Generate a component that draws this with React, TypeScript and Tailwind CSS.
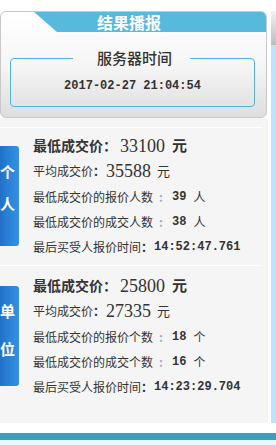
import React from 'react';

const cjk = "font-['Noto_Sans_CJK_SC','Noto_Sans',sans-serif]";
const mono = "font-['Liberation_Mono','Noto_Sans_CJK_SC',monospace]";
const serif = "font-['Liberation_Serif','Noto_Sans_CJK_SC',serif]";

interface Result {
  tab: [string, string];
  tabPad: string;
  tabGap: string;
  sectionPad: string;
  lowest: string;
  average: string;
  unit: string;
  bidCount: string;
  dealCount: string;
  lastTime: string;
}

const results: Result[] = [
  {
    tab: ['个', '人'],
    tabPad: 'pt-[18px]',
    tabGap: 'gap-[17px]',
    sectionPad: 'pt-[5px] pb-[6px]',
    lowest: '33100',
    average: '35588',
    unit: '人',
    bidCount: '39',
    dealCount: '38',
    lastTime: '14:52:47.761',
  },
  {
    tab: ['单', '位'],
    tabPad: 'pt-[17px]',
    tabGap: 'gap-[23px]',
    sectionPad: 'pt-[7px]',
    lowest: '25800',
    average: '27335',
    unit: '个',
    bidCount: '18',
    dealCount: '16',
    lastTime: '14:23:29.704',
  },
];

function CountRow({ label, value, unit, extra }: { label: string; value: string; unit: string; extra?: string }) {
  return (
    <div className={`flex h-[25px] items-center text-[12px] text-[#333] ${extra ?? ''}`}>
      <span>{label}</span>
      <span className="ml-[3px] w-[10px] text-center font-bold text-[#9db0c2]">:</span>
      <span className={`${mono} ml-[6px] text-[12px] font-bold`}>{value}</span>
      <span className="ml-[7px]">{unit}</span>
    </div>
  );
}

function ResultSection({ r }: { r: Result }) {
  return (
    <div className={r.sectionPad}>
      <div className="flex items-start">
        {/* Side tab */}
        <div
          className={`mt-[13px] flex h-[100px] w-[19px] flex-col rounded-r-[3px] bg-gradient-to-r from-[#2070c6] via-[#2b84d7] to-[#3490e2] ${r.tabPad} ${r.tabGap}`}
        >
          {r.tab.map((c) => (
            <span key={c} className="block w-[15px] text-center text-[15px] font-bold leading-[15px] text-white">
              {c}
            </span>
          ))}
        </div>

        {/* Figures */}
        <div className="ml-[14px] flex flex-col">
          <div className="flex h-[25px] items-center text-[#333]">
            <span className="text-[14px] font-bold">最低成交价</span>
            <span className="w-[14px] text-[14px] font-bold">：</span>
            <span className={`${serif} ml-[3px] text-[18px] leading-none`}>{r.lowest}</span>
            <span className="ml-[7px] text-[15px] font-bold">元</span>
          </div>
          <div className="flex h-[25px] items-center text-[#333]">
            <span className="text-[12px]">平均成交价</span>
            <span className="w-[12px] text-[12px] font-bold">：</span>
            <span className={`${serif} ml-[1px] text-[18px] leading-none`}>{r.average}</span>
            <span className="ml-[6px] text-[13px]">元</span>
          </div>
          <CountRow label={`最低成交价的报价${r.unit}数`} value={r.bidCount} unit={r.unit} extra="mt-[1px]" />
          <CountRow label={`最低成交价的成交${r.unit}数`} value={r.dealCount} unit={r.unit} />
          <div className="flex h-[25px] items-center text-[12px] text-[#333]">
            <span>最后买受人报价时间</span>
            <span className="w-[12px] font-bold">：</span>
            <span className={`${mono} ml-[1px] font-bold`}>{r.lastTime}</span>
          </div>
        </div>
      </div>
    </div>
  );
}

export default function App() {
  return (
    <div className={`h-[445px] w-[276px] overflow-hidden bg-white ${cjk}`}>
      <div className="flex pt-[11px]">
        <div className="w-[268px]">
          {/* Header panel */}
          <div className="h-[107px] w-[267px] overflow-hidden rounded-[6px] border border-[#c9c9c9] bg-gradient-to-b from-white via-[#f6f6f6] to-[#dedede]">
            <div className="ml-[33px] flex h-[20px] items-center justify-center bg-[#57b9db] pr-[42px] [clip-path:polygon(0_0,100%_0,100%_100%,23px_100%)]">
              <span className="text-[16px] font-bold leading-none text-white">结果播报</span>
            </div>
            <fieldset className="mt-[16px] ml-[9px] w-[245px] rounded-[4px] border border-[#4db6e0] pb-[12px]">
              <legend className="ml-[62px] pl-[24px] pr-[18px] text-[15px] font-medium leading-[20px] text-[#333]">服务器时间</legend>
              <div className={`${mono} mt-[10px] text-center text-[12px] font-bold leading-[16px] text-[#333]`}>
                2017-02-27 21:04:54
              </div>
            </fieldset>
          </div>

          {/* Results */}
          <div className="h-[305px] bg-[#f5f5f5] pt-[9px]">
            {results.map((r) => (
              <div key={r.lowest}>
                <div className="h-[1px] w-[262px] bg-white" />
                <ResultSection r={r} />
              </div>
            ))}
          </div>
        </div>

        {/* Right track */}
        <div className="ml-[3px] flex h-[412px] w-[5px] flex-col">
          <div className="h-[34px] bg-gradient-to-b from-[#f2f2f2] to-[#bcbcbc]" />
          <div className="flex-1 bg-[#bfe3fb]" />
        </div>
      </div>

      <div className="h-[10px] bg-white" />
      <div className="h-[7px] bg-[#389fc0]" />
      <div className="h-[5px] bg-[#e7fafd]" />
    </div>
  );
}
